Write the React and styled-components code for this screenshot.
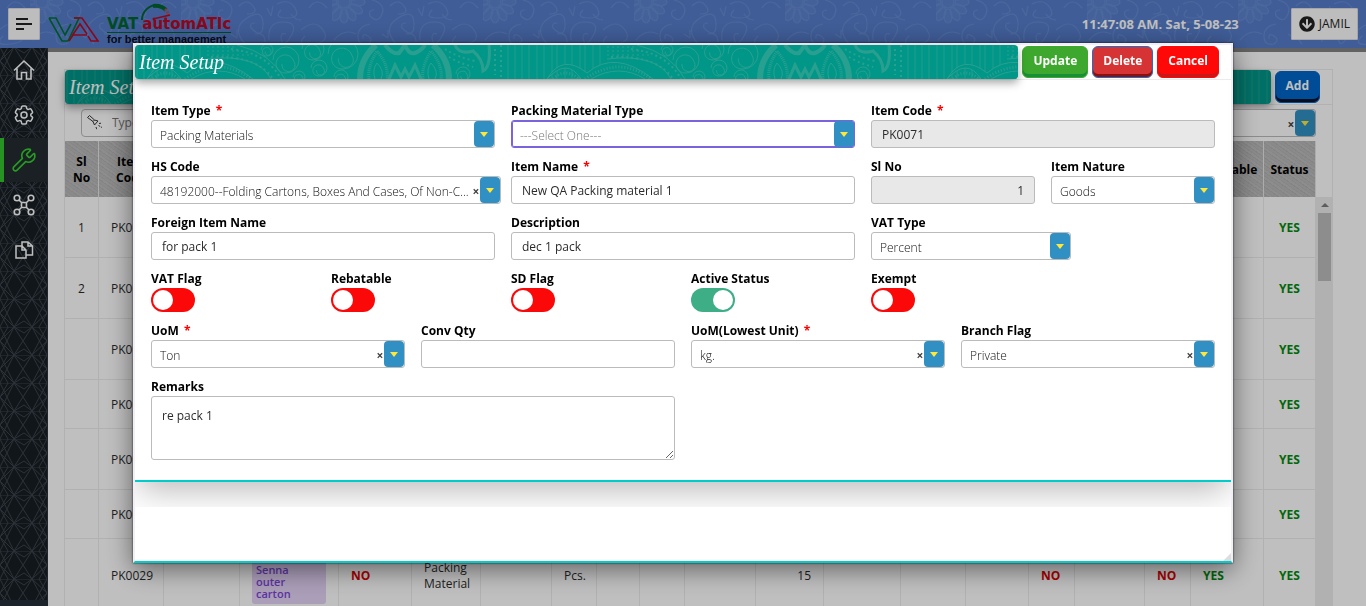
import React from "react";
import styled, { createGlobalStyle, css } from "styled-components";
import { Wrench } from "lucide-react";
import { HiOutlineCog6Tooth } from "react-icons/hi2";
import { FaArrowCircleDown } from "react-icons/fa";

const sans = `"Open Sans", "Noto Sans", sans-serif`;
const serif = `"Liberation Serif", serif`;

const GlobalStyle = createGlobalStyle`
  *, *::before, *::after { box-sizing: border-box; }
  html, body, #root { height: 100%; }
  body { margin: 0; overflow: hidden; font-family: ${sans}; font-size: 12px; line-height: 16px; color: #2b2b2b; background: #fff; }
  button, input, select, textarea { font: inherit; color: inherit; margin: 0; }
  h1, h2 { margin: 0; }
`;

/* ---------- page frame ---------- */

const Page = styled.div`
  display: flex;
  flex-direction: column;
  height: 100vh;
`;

const TopBar = styled.header`
  position: relative;
  display: flex;
  align-items: center;
  flex: none;
  height: 48px;
  padding: 0 8px;
  background: #567dcb;
  overflow: hidden;
`;

const Backdrop = styled.svg`
  position: absolute;
  inset: 0;
  width: 100%;
  height: 100%;
`;

const SquareButton = styled.button`
  position: relative;
  display: flex;
  align-items: center;
  justify-content: center;
  gap: 4px;
  height: 32px;
  min-width: 32px;
  padding: ${(p) => (p.$wide ? "0 7px" : "0")};
  border: 1px solid #dcdce4;
  border-radius: 1px;
  background: #fcfcfc;
  color: #222;
`;

const Brand = styled.a`
  position: relative;
  display: flex;
  align-items: flex-end;
  height: 48px;
  padding-left: 8px;
  gap: 7px;
  text-decoration: none;
`;

const BrandMark = styled.svg`
  width: 52px;
  height: 28px;
  margin-bottom: 4px;
`;

const BrandWords = styled.span`
  display: flex;
  flex-direction: column;
  position: relative;
  padding-bottom: 3px;
`;

const BrandName = styled.span`
  display: flex;
  gap: 4px;
  font: 700 15px/16px "DejaVu Sans", sans-serif;
  color: #00642e;
  border-bottom: 1px solid #00642e;
`;

const BrandAccent = styled.span`
  color: #b80a24;
`;

const BrandTag = styled.span`
  font: 700 11px/12px "Liberation Sans", sans-serif;
  color: #0a0f1c;
`;

const Gauge = styled.svg`
  position: absolute;
  left: 33px;
  top: -13px;
  width: 34px;
  height: 20px;
`;

const Clock = styled.time`
  position: relative;
  margin-left: auto;
  margin-right: 52px;
  font-size: 13px;
  font-weight: 700;
  color: #fff;
`;

const Below = styled.div`
  display: flex;
  flex: 1;
  min-height: 0;
`;

const SideBar = styled.nav`
  position: relative;
  display: flex;
  flex-direction: column;
  gap: 1px;
  flex: none;
  width: 48px;
  background: #171e24;
  border-right: 1px solid #2b333c;
  border-bottom: 6px solid #272f38;
  overflow: hidden;
`;

const SideLink = styled.a`
  position: relative;
  display: flex;
  align-items: center;
  justify-content: center;
  height: 44px;
  color: ${(p) => (p.$active ? "#33d12f" : "#fff")};
  ${(p) =>
    p.$active &&
    css`
      background: #252b31;
      box-shadow: inset 4px 0 0 #33c42f;
    `}
`;

const Main = styled.main`
  flex: 1;
  min-width: 0;
  overflow: hidden;
  border-top: 4px solid #838383;
  padding: 17px 33px 0 16px;
`;

/* ---------- title bars and buttons ---------- */

const TitleRow = styled.div`
  display: flex;
  align-items: center;
  gap: 4px;
  padding-right: 12px;
  border-bottom: 1px solid #ececec;
`;

const Banner = styled.div`
  position: relative;
  flex: 1;
  height: 34px;
  border-radius: 4px;
  background: #009688;
  box-shadow: 0 4px 8px rgba(0, 0, 0, 0.35);
`;

const BannerArt = styled(Backdrop)`
  border-radius: 4px;
`;

const BannerTitle = styled.h2`
  position: relative;
  padding-left: 4px;
  font: italic 400 20px/34px ${serif};
  color: #fff;
`;

const tones = {
  green: ["#3da82d", "#168f38", "#3da82d"],
  crimson: ["#d63434", "#8b1010", "#1473d0"],
  red: ["#ff0808", "#c41a1a", "#ff0808"],
  blue: ["#0066c8", "#001430", "#0066c8"],
};

const ActionButton = styled.button`
  height: 32px;
  padding: 0 10px 2px;
  border: 1px solid ${(p) => tones[p.$tone][2]};
  border-radius: 6px;
  background: ${(p) => tones[p.$tone][0]};
  box-shadow: inset 0 -3px 0 ${(p) => tones[p.$tone][1]};
  color: #fff;
  font-size: 12px;
  font-weight: 700;
`;

/* ---------- background list ---------- */

const Card = styled.section`
  border: 1px solid #ececec;
  border-bottom: 0;
  min-height: 100%;
`;

const Filters = styled.div`
  display: flex;
  gap: 16px;
  padding: 4px 16px;
`;

const SearchBox = styled.label`
  display: flex;
  align-items: center;
  gap: 8px;
  flex: 1;
  height: 28px;
  padding-left: 4px;
  border: 1px solid #bbb;
  border-radius: 4px;
  & input {
    flex: 1;
    border: 0;
    padding: 0;
    background: none;
    outline: 0;
  }
`;

const ListArea = styled.div`
  display: flex;
`;

const ListTable = styled.table`
  flex: 1;
  width: 100%;
  table-layout: fixed;
  border-collapse: separate;
  border-spacing: 0;
`;

const HeadCell = styled.th`
  height: 56px;
  padding: 2px 4px 0;
  border-right: 1px solid #e6e6e6;
  background: repeating-linear-gradient(35deg, #b9b9b9 0 2px, #b1b1b1 2px 3px, #bdbdbd 3px 5px, #b4b4b4 5px 6px);
  color: #000;
  font-weight: 700;
`;

const Cell = styled.td`
  height: ${(p) => p.$h}px;
  padding: 2px 12px 0;
  border-right: 1px solid #ececec;
  border-bottom: 1px solid #ececec;
  text-align: ${(p) => p.$align || "left"};
  vertical-align: middle;
`;

const Flag = styled.span`
  font-weight: 700;
  color: ${(p) => (p.$yes ? "#008a0e" : "#e00000")};
`;

const Tag = styled.span`
  display: block;
  padding: 16px 16px 4px 4px;
  border-radius: 3px;
  background: #e4d3f7;
  color: #7b45d6;
  font-size: 11px;
  font-weight: 600;
  line-height: 12px;
`;

const ScrollTrack = styled.div`
  flex: none;
  width: 17px;
  margin-top: 56px;
  padding: 6px 2px;
  background: #ededed;
  display: flex;
  flex-direction: column;
  align-items: center;
  gap: 6px;
`;

const ScrollUp = styled.i`
  border: 4px solid transparent;
  border-top-width: 0;
  border-bottom-color: #7d7d7d;
`;

const ScrollThumb = styled.i`
  width: 13px;
  height: 68px;
  background: #bdbdbd;
`;

/* ---------- modal ---------- */

const Scrim = styled.div`
  position: fixed;
  inset: 0;
  display: flex;
  align-items: center;
  justify-content: center;
  background: rgba(0, 0, 0, 0.25);
`;

const Dialog = styled.div`
  position: relative;
  width: min(1100px, 100% - 32px);
  padding-bottom: 54px;
  border: 2px solid #f1eff5;
  border-bottom-color: #00cccc;
  background: #fff;
  box-shadow: 0 0 2px rgba(0, 0, 0, 0.8), 0 6px 24px rgba(0, 0, 0, 0.5);
`;

const Grip = styled.i`
  position: absolute;
  right: 0;
  bottom: 0;
  border: 4px solid transparent;
  border-right-color: #ddd;
  border-bottom-color: #ddd;
`;

const ShadowRoom = styled.div`
  padding-bottom: 25px;
  overflow: hidden;
`;

const Form = styled.form`
  display: grid;
  grid-template-columns: repeat(12, minmax(0, 1fr));
  gap: 8px 16px;
  padding: 20px 16px;
  border-bottom: 2px solid #00cccc;
  box-shadow: 0 12px 32px -4px rgba(0, 0, 0, 0.28);
`;

const Field = styled.div`
  grid-column: span ${(p) => p.$span};
  display: flex;
  flex-direction: column;
  align-items: flex-start;
`;

const Spacer = styled.div`
  grid-column: span ${(p) => p.$span};
`;

const Label = styled.label`
  padding-top: 2px;
  font-size: 12px;
  font-weight: 700;
  line-height: 18px;
  color: #000;
  white-space: nowrap;
`;

const Star = styled.span`
  margin-left: 2px;
  color: #ff0000;
`;

const boxed = css`
  border: 1px solid #bbb;
  border-radius: 3px;
  background: #fff;
`;

const TextInput = styled.input`
  ${boxed}
  width: 100%;
  height: 28px;
  padding: 0 10px;
  text-align: ${(p) => (p.$right ? "right" : "left")};
  &:read-only { background: #e8e8e8; }
`;

const TextArea = styled.textarea`
  ${boxed}
  display: block;
  width: 100%;
  height: 64px;
  padding: 11px 10px;
  resize: both;
`;

const SelectBox = styled.div`
  ${boxed}
  position: relative;
  display: flex;
  width: ${(p) => p.$width || "100%"};
  height: 28px;
  ${(p) => p.$focused && css`box-shadow: inset 0 0 0 1px #7a63dd; border-color: #7a63dd;`}
  & select {
    appearance: none;
    flex: 1;
    min-width: 0;
    padding: 4px 20px 0 8px;
    border: 0;
    outline: 0;
    background: none;
    color: ${(p) => (p.$empty ? "#777" : "#111")};
    font-weight: 300;
    text-overflow: ellipsis;
  }
`;

const ArrowCap = styled.span`
  position: absolute;
  top: 0;
  right: 0;
  bottom: 0;
  display: flex;
  align-items: center;
  justify-content: center;
  width: 20px;
  border-radius: 4px;
  background: #3190c3;
  pointer-events: none;
  &::before {
    content: "";
    border: 4px solid transparent;
    border-top: 5px solid #ffe83b;
    border-bottom: 0;
  }
`;

const ClearButton = styled.button`
  position: absolute;
  top: 7px;
  right: 19px;
  width: 10px;
  padding: 0;
  border: 0;
  background: none;
  font-weight: 700;
  color: #444;
`;

const Toggle = styled.input`
  appearance: none;
  width: 44px;
  height: 24px;
  padding: 2px;
  border-radius: 12px;
  background: #fb0909;
  display: flex;
  &::before {
    content: "";
    width: 20px;
    height: 20px;
    border-radius: 50%;
    background: #fff;
  }
  &:checked {
    background: #3dae86;
    justify-content: flex-end;
  }
`;

/* ---------- drawings ---------- */

function FloralPattern() {
  const petals = [0, 30, 60, 90, 120, 150, 180, 210, 240, 270, 300, 330];
  return (
    <Backdrop aria-hidden="true">
      <defs>
        <pattern id="floral" width="151" height="96" patternUnits="userSpaceOnUse" x="30">
          <g fill="none" stroke="#7397d8" strokeWidth="1.2" opacity=".5">
            <g fill="#7397d8" fillOpacity=".35">
              {petals.map((a) => (
                <ellipse key={a} cx="0" cy="-14" rx="4" ry="7" transform={`translate(12 2) rotate(${a})`} />
              ))}
              <circle cx="12" cy="2" r="6" />
            </g>
            <path d="M40 0q14 4 10 14t-12 2q-2-6 4-6M38 24q-12 2-12 12t10 8q6-4 0-8t-5 3" />
            <path d="M64 44q-14-16 2-26t16 6-12 4q-2-5 4-5M58 6q8-8 14 0t-6 8M88 40q-2-18 14-18t8 14-10 2q0-6 5-4" />
            <path d="M96 4q12-6 18 4t-8 10-6-8M120 30q14-12 22 0t-10 14-8-8M128 8q8-12 18 0M74 34q10-2 10 8M2 40q10-12 22-6" />
            <path d="M110 14q4 6 10 6M86 8l4 8M92 6l-2 10M50 34l6 4M56 30v8" />
          </g>
        </pattern>
      </defs>
      <rect width="100%" height="100%" fill="url(#floral)" />
    </Backdrop>
  );
}

function spiral(x, y, r) {
  return `M${x - r} ${y}a${r} ${r} 0 1 1 ${r} ${r}a${r * 0.7} ${r * 0.7} 0 1 1 ${r * 0.6} ${-r * 0.9}a${r * 0.5} ${r * 0.5} 0 1 1 ${-r * 0.9} ${r * 0.2}`;
}

function PaisleyPattern({ id }) {
  const stripes = [2, 9, 17, 22, 30, 37, 45, 50, 58, 65, 373, 380, 387, 394];
  const curls = [[132, 5, 6], [151, 15, 13], [178, 4, 11], [184, 23, 8], [208, 9, 15], [206, 32, 7], [164, 32, 6], [328, 29, 7]];
  return (
    <BannerArt aria-hidden="true">
      <defs>
        <pattern id={id} width="400" height="34" patternUnits="userSpaceOnUse">
          <g fill="none" stroke="#299f8f" strokeWidth="1">
            {stripes.map((x) => (
              <path key={x} d={`M${x} 0v34`} opacity=".8" />
            ))}
            <path d="M46 34q-14-22-34 0z M12 34q15-26 40-6 28-24 66 6" fill="#009688" />
            <path d="M18 34q12-12 26 0M50 34q34-24 66 0" strokeDasharray="1 2" strokeWidth="3" />
            <path d="M56 34q28-16 54 0" />
            <path d="M72 2h28M72 6h34M72 10h44" strokeDasharray="2 3" />
            <path d="M72 14q50-6 64 20M102 0q34 8 48 34" />
            <path d="M76 12q46-2 62 22M96 4q36 4 50 30" strokeDasharray="2 3" strokeWidth="2" />
            {curls.map(([x, y, r]) => (
              <path key={`${x}-${y}`} d={spiral(x, y, r)} />
            ))}
            <path d="M225 34q0-20 16-34M314 34q0-20-16-34" strokeWidth="6" />
            <path d="M234 34q-2-12 8-28 12 14 10 28M288 34q-2-12 8-28 12 14 10 28" strokeWidth="3" strokeDasharray="1 1" />
            <path d="M240 34q-3-10 2-16 8 8 4 16M294 34q-3-10 2-16 8 8 4 16" />
            <path d="M254 34l6-14 6 12 4-8 4 8 6-12 6 14" strokeWidth="3" />
            <path d="M250 0q8 10 14 8l6-8q4 10 10 8t10-8" strokeWidth="4" />
            <path d="M320 0q4 10 18 6 10 8 10 20 8-4 6-26" strokeWidth="3" />
            <path d="M310 4q12 8 30 12M314 12q10 6 24 10M360 4v26M366 0v34" strokeDasharray="2 3" strokeWidth="2" />
          </g>
        </pattern>
      </defs>
      <rect width="100%" height="100%" fill={`url(#${id})`} />
    </BannerArt>
  );
}

function LatticePattern() {
  return (
    <Backdrop aria-hidden="true">
      <defs>
        <pattern id="lattice" width="47" height="28" y="-1" patternUnits="userSpaceOnUse">
          <path
            d="M0 0h47M0 14L14 0l18 28L47 14 32 0 14 28zM14 0L0 28M32 0l15 28M14 28L0 0M32 28L47 0M14 0l10 6 8-6M14 28l10-6 8 6M0 14l8 14M0 14l8-14M47 14l-8 14M47 14l-8-14"
            fill="none"
            stroke="#3a434b"
          />
        </pattern>
      </defs>
      <rect width="100%" height="100%" fill="url(#lattice)" />
    </Backdrop>
  );
}

const HomeIcon = () => (
  <svg width="22" height="22" viewBox="0 0 22 22" fill="none" stroke="currentColor" strokeWidth="1.6">
    <path d="M1 11.5L11 2l10 9.500M4 9.500v10.500h4.500v-6.500h5v6.500H18V9.500" />
  </svg>
);

const NodesIcon = () => (
  <svg width="22" height="22" viewBox="0 0 22 22" fill="none" stroke="currentColor" strokeWidth="1.6">
    <circle cx="4" cy="4" r="2.800" />
    <circle cx="18" cy="4" r="2.800" />
    <circle cx="4" cy="18" r="2.800" />
    <circle cx="18" cy="18" r="2.800" />
    <rect x="8.500" y="8.500" width="5" height="5" rx="1" />
    <path d="M6 6l2.700 2.700M16 6l-2.700 2.700M6 16l2.700-2.700M16 16l-2.700-2.700" />
  </svg>
);

const PagesIcon = () => (
  <svg width="20" height="20" viewBox="0 0 20 20" fill="none" stroke="currentColor" strokeWidth="1.500">
    <path d="M2 6h6l4 4v8H2zM8 6v4h4" />
    <path d="M8 6V2h6l4.500 4v9H12M14 2v4h4.500" />
  </svg>
);

const TorchIcon = () => (
  <svg width="18" height="18" viewBox="0 0 18 18" fill="none" stroke="#333">
    <path d="M1.500 3.500l2-2 5 4.500 3.500 1-3.500 4-1.500-3.500zM7 7.500L8.500 6" />
    <path d="M13 9.500l3-.5M12.500 11.500l3.500 2M10 13l1 3" strokeDasharray="2 1" />
  </svg>
);

function Logo() {
  return (
    <Brand href="#home">
      <BrandMark viewBox="0 0 52 28" fill="none" strokeWidth="1.600">
        <path d="M1 2h7l9 17 6-11M1 2l13 23h6L31 2h-5" stroke="#00702f" />
        <path d="M26 2h8l16 23H43l-3-5M24 20L32 8l7 10M21 25l4-6h14" stroke="#b80a24" />
      </BrandMark>
      <BrandWords>
        <Gauge viewBox="0 0 34 20" fill="none">
          <path d="M2 17A15 15 0 0 1 17 2" stroke="#00642e" strokeWidth="2" />
          <path d="M13 3q8-1 13 4" stroke="#00642e" strokeWidth="4" />
          <path d="M25 6q4 4 3 8" stroke="#a4525c" strokeWidth="3" strokeDasharray="2 1" />
          <path d="M13 16l17-4" stroke="#b80a24" strokeWidth="1.500" />
          <circle cx="14" cy="16" r="1.500" fill="#b80a24" />
        </Gauge>
        <BrandName>
          VAT<BrandAccent>automATIc</BrandAccent>
        </BrandName>
        <BrandTag>for better management</BrandTag>
      </BrandWords>
    </Brand>
  );
}

/* ---------- composed parts ---------- */

function SelectField({ id, label, required, span, value, clearable, ...look }) {
  return (
    <Field $span={span}>
      <Label htmlFor={id}>
        {label}
        {required && <Star> *</Star>}
      </Label>
      <SelectBox {...look}>
        <select id={id} defaultValue={value}>
          <option>{value}</option>
        </select>
        {clearable && <ClearButton type="button" aria-label={`Clear ${label}`}>×</ClearButton>}
        <ArrowCap />
      </SelectBox>
    </Field>
  );
}

function TextField({ id, label, required, span, value, ...rest }) {
  return (
    <Field $span={span}>
      <Label htmlFor={id}>
        {label}
        {required && <Star> *</Star>}
      </Label>
      <TextInput id={id} defaultValue={value} {...rest} />
    </Field>
  );
}

function ToggleField({ id, label, on }) {
  return (
    <Field $span={2}>
      <Label htmlFor={id}>{label}</Label>
      <Toggle id={id} type="checkbox" defaultChecked={on} />
    </Field>
  );
}

function TitleBar({ artId, title, children }) {
  return (
    <TitleRow>
      <Banner>
        <PaisleyPattern id={artId} />
        <BannerTitle>{title}</BannerTitle>
      </Banner>
      {children}
    </TitleRow>
  );
}

const columns = [34, 65, 76, 99, 73, 69, 71, 45, 43, 45, 71, 68, 77, 65, 63, 46, 70, 46, 73, 52];
const headings = { 0: "Sl No", 1: "Item Code", 18: "Rebatable", 19: "Status" };

const rows = [
  { h: 61, sl: "1", code: "PK0071" },
  { h: 61, sl: "2", code: "PK0070" },
  { h: 61, code: "PK0069" },
  { h: 49, code: "PK0068" },
  { h: 61, code: "PK0067" },
  { h: 49, code: "PK0030" },
  {
    h: 73,
    code: "PK0029",
    3: <Tag>Senna outer carton</Tag>,
    4: <Flag>NO</Flag>,
    5: "Packing Material",
    7: "Pcs.",
    11: "15",
    15: <Flag>NO</Flag>,
    17: <Flag>NO</Flag>,
    18: <Flag $yes>YES</Flag>,
  },
];

function cellContent(row, i) {
  if (i === 0) return row.sl;
  if (i === 1) return row.code;
  if (i === 19) return <Flag $yes>YES</Flag>;
  return row[i];
}

const alignments = { 0: "center", 11: "right", 19: "center" };

function ItemList() {
  return (
    <Card>
      <TitleBar artId="paisley-list" title="Item Setup">
        <ActionButton type="button" $tone="blue">Add</ActionButton>
      </TitleBar>
      <Filters>
        <SearchBox>
          <TorchIcon />
          <input type="search" placeholder="Type to search" aria-label="Search items" />
        </SearchBox>
        <SelectBox $width="200px">
          <select aria-label="Filter items" />
          <ClearButton type="button" aria-label="Clear filter">×</ClearButton>
          <ArrowCap />
        </SelectBox>
      </Filters>
      <ListArea>
        <ListTable>
          <colgroup>
            {columns.map((w, i) => (
              <col key={i} width={w} />
            ))}
          </colgroup>
          <thead>
            <tr>
              {columns.map((_, i) => (
                <HeadCell key={i} scope="col">{headings[i]}</HeadCell>
              ))}
            </tr>
          </thead>
          <tbody>
            {rows.map((row) => (
              <tr key={row.code}>
                {columns.map((_, i) => (
                  <Cell key={i} $h={row.h} $align={alignments[i]}>{cellContent(row, i)}</Cell>
                ))}
              </tr>
            ))}
          </tbody>
        </ListTable>
        <ScrollTrack>
          <ScrollUp />
          <ScrollThumb />
        </ScrollTrack>
      </ListArea>
    </Card>
  );
}

function ItemDialog() {
  return (
    <Scrim>
      <Dialog role="dialog" aria-label="Item Setup">
        <TitleBar artId="paisley-dialog" title="Item Setup">
          <ActionButton type="submit" form="item-form" $tone="green">Update</ActionButton>
          <ActionButton type="button" $tone="crimson">Delete</ActionButton>
          <ActionButton type="button" $tone="red">Cancel</ActionButton>
        </TitleBar>
        <ShadowRoom>
          <Form id="item-form">
            <SelectField id="item-type" label="Item Type" required span={4} value="Packing Materials" />
            <SelectField id="pack-type" label="Packing Material Type" span={4} value="---Select One---" $focused $empty />
            <TextField id="item-code" label="Item Code" required span={4} value="PK0071" readOnly />

            <SelectField
              id="hs-code"
              label="HS Code"
              span={4}
              value="48192000--Folding Cartons, Boxes And Cases, Of Non-C..."
              clearable
              $width="calc(100% + 6px)"
            />
            <TextField id="item-name" label="Item Name" required span={4} value="New QA Packing material 1" />
            <TextField id="sl-no" label="Sl No" span={2} value="1" readOnly $right />
            <SelectField id="nature" label="Item Nature" span={2} value="Goods" />

            <TextField id="foreign-name" label="Foreign Item Name" span={4} value="for pack 1" />
            <TextField id="description" label="Description" span={4} value="dec 1 pack" />
            <SelectField id="vat-type" label="VAT Type" span={4} value="Percent" $width="200px" />

            <ToggleField id="vat-flag" label="VAT Flag" />
            <ToggleField id="rebatable" label="Rebatable" />
            <ToggleField id="sd-flag" label="SD Flag" />
            <ToggleField id="active" label="Active Status" on />
            <ToggleField id="exempt" label="Exempt" />
            <Spacer $span={2} />

            <SelectField id="uom" label="UoM" required span={3} value="Ton" clearable />
            <TextField id="conv-qty" label="Conv Qty" span={3} value="" />
            <SelectField id="uom-low" label="UoM(Lowest Unit)" required span={3} value="kg." clearable />
            <SelectField id="branch" label="Branch Flag" span={3} value="Private" clearable />

            <Field $span={6}>
              <Label htmlFor="remarks">Remarks</Label>
              <TextArea id="remarks" defaultValue="re pack 1" />
            </Field>
          </Form>
        </ShadowRoom>
        <Grip />
      </Dialog>
    </Scrim>
  );
}

export default function App() {
  return (
    <>
      <GlobalStyle />
      <Page>
        <TopBar>
          <FloralPattern />
          <SquareButton type="button" aria-label="Toggle menu">
            <svg width="16" height="12" viewBox="0 0 16 12" stroke="#222" strokeWidth="2">
              <path d="M0 1h12M0 6h16M0 11h8" />
            </svg>
          </SquareButton>
          <Logo />
          <Clock>11:47:08 AM. Sat, 5-08-23</Clock>
          <SquareButton type="button" $wide>
            <FaArrowCircleDown size={16} />
            JAMIL
          </SquareButton>
        </TopBar>
        <Below>
          <SideBar aria-label="Sections">
            <LatticePattern />
            <SideLink href="#home" aria-label="Home"><HomeIcon /></SideLink>
            <SideLink href="#settings" aria-label="Settings"><HiOutlineCog6Tooth size={24} /></SideLink>
            <SideLink href="#setup" aria-label="Setup" $active><Wrench size={26} strokeWidth={1.5} /></SideLink>
            <SideLink href="#process" aria-label="Process"><NodesIcon /></SideLink>
            <SideLink href="#reports" aria-label="Reports"><PagesIcon /></SideLink>
          </SideBar>
          <Main>
            <ItemList />
          </Main>
        </Below>
      </Page>
      <ItemDialog />
    </>
  );
}
